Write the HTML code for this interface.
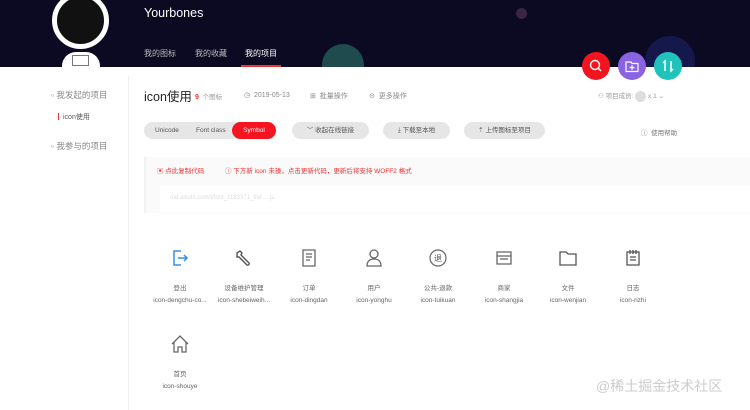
<!DOCTYPE html>
<html><head><meta charset="utf-8"><style>
*{margin:0;padding:0;box-sizing:border-box}
body{width:750px;height:410px;overflow:hidden;background:#fff;font-family:"Liberation Sans","Noto Sans CJK SC",sans-serif;position:relative;color:#333}
.hdr{position:absolute;left:0;top:0;width:750px;height:67px;background:#0b0a22;overflow:hidden}
.abs{position:absolute}
.nav{font-size:8px;color:#bbb;top:48px}
.side{font-size:8.5px;color:#888}
.btn{position:absolute;height:17px;border-radius:9px;background:#e6e6e6;font-size:6.5px;color:#555;line-height:17px;text-align:center}
.fab{position:absolute;width:28px;height:28px;border-radius:50%;top:52px}
.ic{position:absolute;width:64px;text-align:center;font-size:6.5px;color:#666}
.ic svg{display:block;margin:0 auto 15px}
.ic div{line-height:12px}
</style></head><body>
<div class="hdr">
<div class="abs" style="left:516px;top:8px;width:11px;height:11px;border-radius:50%;background:#3c2445"></div>
<div class="abs" style="left:322px;top:44px;width:42px;height:42px;border-radius:50%;background:#1f4a4e"></div>
<div class="abs" style="left:645px;top:36px;width:50px;height:50px;border-radius:50%;background:#14184a"></div>
<div class="abs" style="left:62px;top:52px;width:38px;height:30px;border-radius:14px 14px 0 0;background:#fff"></div>
<div class="abs" style="left:72px;top:55px;width:17px;height:11px;border:1.5px solid #777;background:#fff"></div>
<div class="abs" style="left:52px;top:-8px;width:57px;height:57px;border-radius:50%;background:#111;border:5px solid #fff"></div>
</div>
<div class="abs" style="left:144px;top:6px;font-size:12.5px;color:#fff">Yourbones</div>
<div class="abs nav" style="left:144px">我的图标</div>
<div class="abs nav" style="left:195px">我的收藏</div>
<div class="abs nav" style="left:245px;color:#fff">我的项目</div>
<div class="abs" style="left:241px;top:65px;width:40px;height:2px;background:#e33"></div>
<div class="fab" style="left:582px;background:#f2141f"><svg width="28" height="28"><circle cx="13" cy="13" r="4.5" fill="none" stroke="#fff" stroke-width="1.4"/><line x1="16.5" y1="16.5" x2="19" y2="19" stroke="#fff" stroke-width="1.4"/></svg></div>
<div class="fab" style="left:618px;background:#8a62e4"><svg width="28" height="28"><path d="M8 10h5l1 1.5h6v8H8z" fill="none" stroke="#fff" stroke-width="1.2"/><path d="M14 13v5M11.5 15.5h5" stroke="#fff" stroke-width="1.2"/></svg></div>
<div class="fab" style="left:654px;background:#20c2bc"><svg width="28" height="28"><path d="M11 19V9l-2 2M17 9v10l2-2" fill="none" stroke="#fff" stroke-width="1.5"/></svg></div>
<div class="abs" style="left:128px;top:76px;width:1px;height:334px;background:#eee"></div>
<div class="abs side" style="left:51px;top:89px">▫ 我发起的项目</div>
<div class="abs" style="left:58px;top:113px;width:1px;height:7px;background:#e33"></div>
<div class="abs" style="left:63px;top:112px;font-size:7px;color:#555">icon使用</div>
<div class="abs side" style="left:51px;top:140px">▫ 我参与的项目</div>
<div class="abs" style="left:144px;top:86px;font-size:12.5px;color:#222">icon使用</div>
<div class="abs" style="left:195px;top:91px;font-size:7px;color:#e33;font-weight:bold">9 <span style="font-weight:normal;color:#999;font-size:6.5px">&nbsp;个图标</span></div>
<div class="abs" style="left:244px;top:91px;font-size:7px;color:#888">◷ &nbsp;2019-05-13</div>
<div class="abs" style="left:310px;top:91px;font-size:7px;color:#888">⊞ &nbsp;批量操作</div>
<div class="abs" style="left:369px;top:91px;font-size:7px;color:#888">⊝ &nbsp;更多操作</div>
<div class="abs" style="left:598px;top:90px;font-size:6.5px;color:#999">⚇ 项目成员: <span style="display:inline-block;width:11px;height:11px;border-radius:50%;background:#ddd;vertical-align:middle"></span> x 1 ⌄</div>
<div class="btn" style="left:144px;top:122px;width:132px"></div>
<div class="abs" style="left:155px;top:127px;font-size:6.5px;color:#555">Unicode</div>
<div class="abs" style="left:196px;top:127px;font-size:6.5px;color:#555">Font class</div>
<div class="btn" style="left:232px;top:122px;width:44px;background:#f5141f;color:#fff">Symbol</div>
<div class="btn" style="left:292px;top:122px;width:77px">︶ 收起在线链接</div>
<div class="btn" style="left:383px;top:122px;width:67px">⤓ 下载至本地</div>
<div class="btn" style="left:464px;top:122px;width:81px">⇡ 上传图标至项目</div>
<div class="abs" style="left:641px;top:127px;font-size:6.5px;color:#777">ⓘ &nbsp;使用帮助</div>
<div class="abs" style="left:144px;top:157px;width:606px;height:56px;background:#fafafa;border-left:2px solid #f2f2f2"></div>
<div class="abs" style="left:157px;top:165px;font-size:6.5px;color:#e33">▣ 点此复制代码</div>
<div class="abs" style="left:225px;top:165px;font-size:6.5px;color:#e33">ⓘ 下方新 icon 未操，点击更新代码，更新后将支持 WOFF2 格式</div>
<div class="abs" style="left:160px;top:186px;width:590px;height:26px;background:#fff"></div>
<div class="abs" style="left:170px;top:195px;font-size:6px;color:#ddd">//at.alicdn.com/t/font_1183371_9af.....js</div>

<div class="ic" style="left:148px;top:248px"><svg width="20" height="20" viewBox="0 0 20 20"><path d="M11 3H4v14h7M8 10h9M14 7l3 3-3 3" fill="none" stroke="#3b8de8" stroke-width="1.5"/></svg><div>登出</div><div>icon-dengchu-co...</div></div>
<div class="ic" style="left:212px;top:248px"><svg width="20" height="20" viewBox="0 0 20 20"><path d="M3 5l3-2 2 2-1 2 8 8a1.5 1.5 0 0 1-2 2L5 9 3 9z" fill="none" stroke="#555" stroke-width="1.4"/></svg><div>设备维护管理</div><div>icon-shebeiweih...</div></div>
<div class="ic" style="left:277px;top:248px"><svg width="20" height="20" viewBox="0 0 20 20"><path d="M4 2h12v16H4zM7 6h6M7 9h6M7 12h4" fill="none" stroke="#666" stroke-width="1.3"/></svg><div>订单</div><div>icon-dingdan</div></div>
<div class="ic" style="left:342px;top:248px"><svg width="20" height="20" viewBox="0 0 20 20"><circle cx="10" cy="6" r="4" fill="none" stroke="#666" stroke-width="1.3"/><path d="M3 18c0-5 3-7 7-7s7 2 7 7z" fill="none" stroke="#666" stroke-width="1.3"/></svg><div>用户</div><div>icon-yonghu</div></div>
<div class="ic" style="left:406px;top:248px"><svg width="20" height="20" viewBox="0 0 20 20"><circle cx="10" cy="10" r="8" fill="none" stroke="#666" stroke-width="1.2"/><text x="10" y="13" font-size="8" text-anchor="middle" fill="#555">退</text></svg><div>公共-退款</div><div>icon-tuikuan</div></div>
<div class="ic" style="left:472px;top:248px"><svg width="20" height="20" viewBox="0 0 20 20"><path d="M3 4h14v12H3zM3 8h14M6 11h8" fill="none" stroke="#666" stroke-width="1.3"/></svg><div>商家</div><div>icon-shangjia</div></div>
<div class="ic" style="left:536px;top:248px"><svg width="20" height="20" viewBox="0 0 20 20"><path d="M2 4h6l2 2h8v11H2z" fill="none" stroke="#555" stroke-width="1.3"/></svg><div>文件</div><div>icon-wenjian</div></div>
<div class="ic" style="left:601px;top:248px"><svg width="20" height="20" viewBox="0 0 20 20"><path d="M4 4h12v13H4zM7 2v4M10 2v4M13 2v4M7 9h6M7 12h6" fill="none" stroke="#555" stroke-width="1.3"/></svg><div>日志</div><div>icon-rizhi</div></div>
<div class="ic" style="left:148px;top:334px"><svg width="20" height="20" viewBox="0 0 20 20"><path d="M2 10l8-8 8 8M4 8v10h4v-5h4v5h4V8" fill="none" stroke="#666" stroke-width="1.3"/></svg><div>首页</div><div>icon-shouye</div></div>
<div class="abs" style="left:596px;top:376px;font-size:14px;color:#ccc">@稀土掘金技术社区</div>
</body></html>
